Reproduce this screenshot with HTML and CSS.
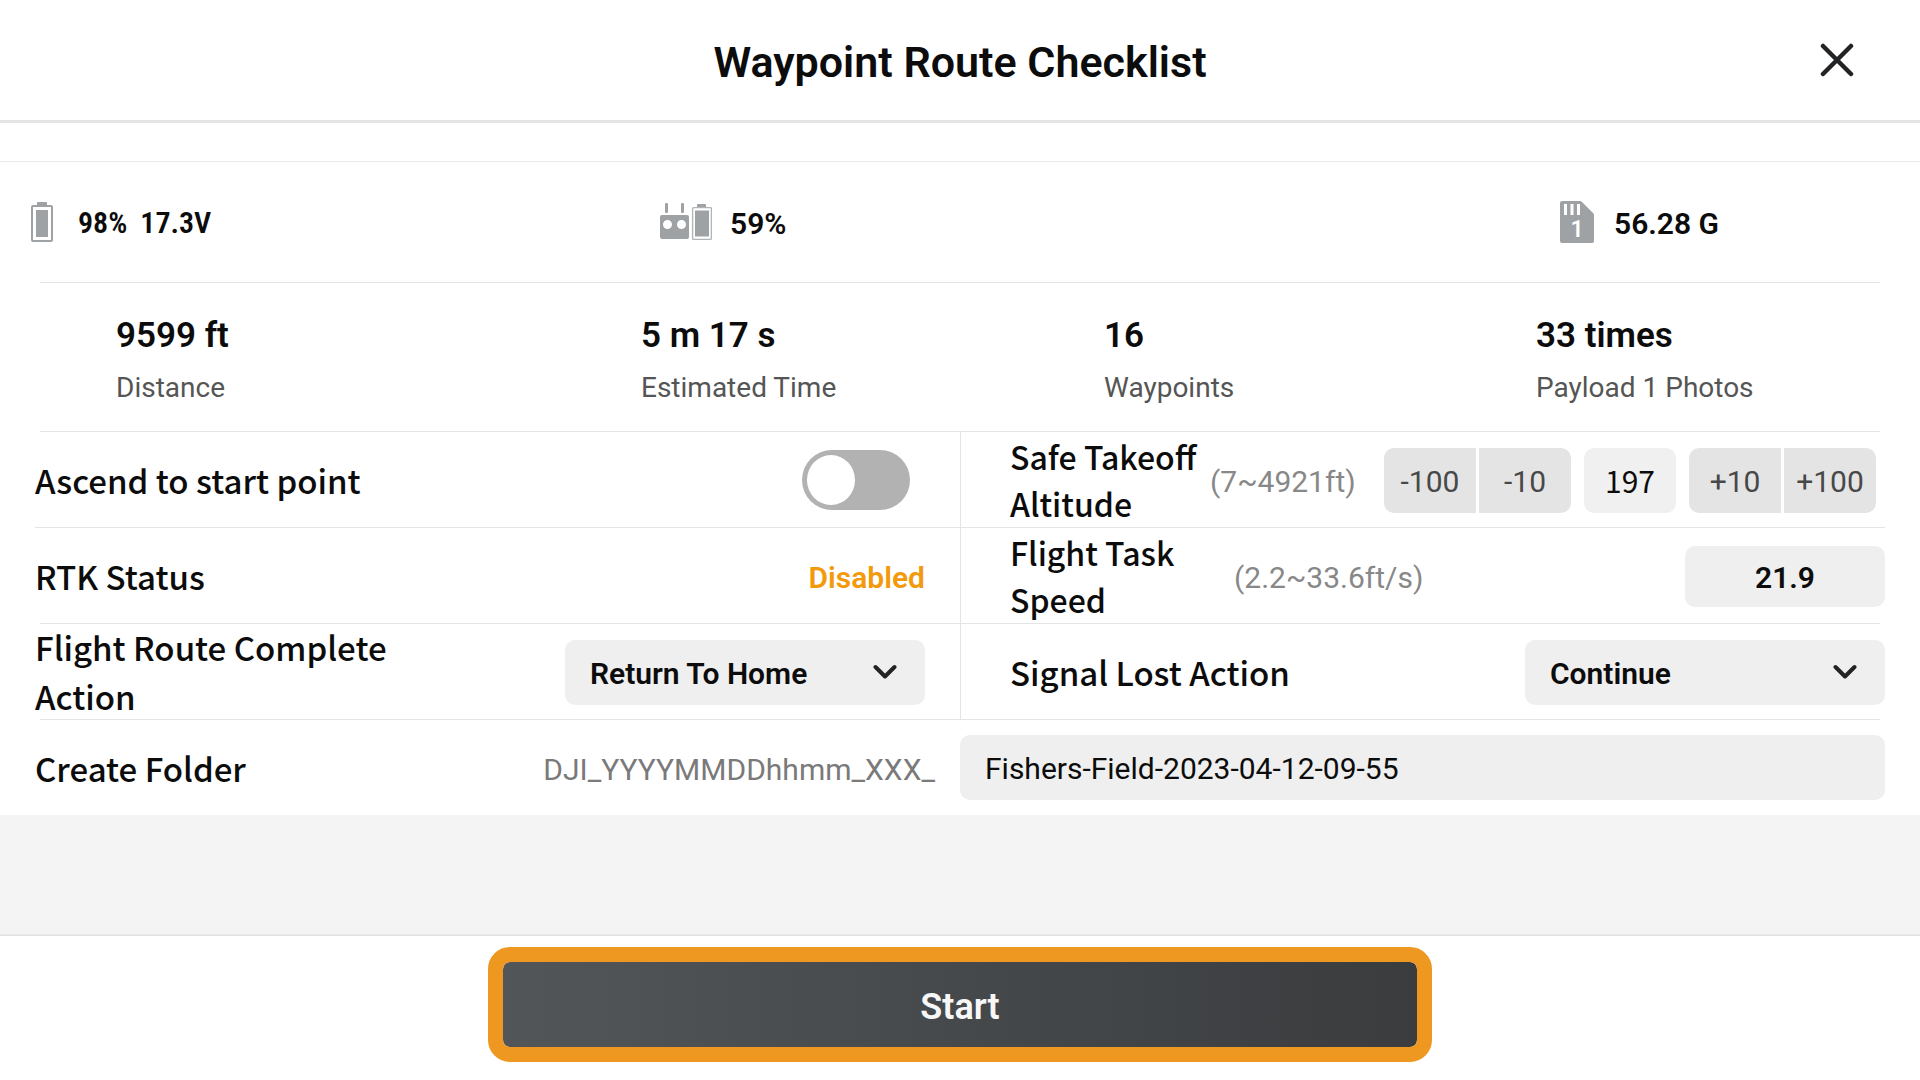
FILE: index.html
```html
<!DOCTYPE html>
<html lang="en">

<head>
    <meta charset="UTF-8">
    <meta name="viewport" content="width=device-width, initial-scale=1.0">
    <title>Waypoint Route Checklist</title>
    <link rel="stylesheet" href="styles.css">
</head>

<body>
    <header>
        <h1>Waypoint Route Checklist</h1>
        <button type="button" class="close" aria-label="Close">
            <svg width="34" height="34" viewBox="0 0 34 34">
                <path d="M3 3L31 31M31 3L3 31" fill="none" stroke="#212325" stroke-width="4.500" stroke-linecap="round"/>
            </svg>
        </button>
    </header>

    <main>
        <form id="checklist">
            <div class="status">
                <div class="state">
                    <svg class="icon-battery" width="22" height="40" viewBox="0 0 22 40">
                        <path d="M6 4V1a1 1 0 0 1 1-1h8a1 1 0 0 1 1 1v3z" fill="#9ea2a5"/>
                        <rect x="1" y="4" width="20" height="35" rx="1" fill="none" stroke="#9ea2a5" stroke-width="2"/>
                        <rect x="5" y="8" width="12" height="27" fill="#9ea2a5"/>
                    </svg>
                    <p class="narrow"><span>98%</span><span>17.3V</span></p>
                </div>
                <div class="state">
                    <svg class="icon-remote" width="52" height="38" viewBox="0 0 52 38">
                        <g fill="#9ea2a5">
                            <rect x="5" y="0" width="3" height="10" rx="1"/>
                            <rect x="21" y="0" width="3" height="10" rx="1"/>
                            <path fill-rule="evenodd" d="M2 12h25a2 2 0 0 1 2 2v20a2 2 0 0 1-2 2H2a2 2 0 0 1-2-2V14a2 2 0 0 1 2-2zM7.500 17a4.500 4.500 0 1 0 0 9a4.500 4.500 0 1 0 0-9zM21.500 17a4.500 4.500 0 1 0 0 9a4.500 4.500 0 1 0 0-9z"/>
                            <path d="M37 4V2a1 1 0 0 1 1-1h7a1 1 0 0 1 1 1v2z"/>
                            <rect x="35" y="7.500" width="14" height="26"/>
                        </g>
                        <rect x="32.600" y="4.600" width="18.800" height="31.800" rx="1" fill="none" stroke="#b2b5b7" stroke-width="1.400"/>
                    </svg>
                    <p>59%</p>
                </div>
                <div class="state">
                    <svg class="icon-card" width="34" height="42" viewBox="0 0 34 42">
                        <path d="M2 0H20Q21 0 22 1L33 12Q34 13 34 14V40a2 2 0 0 1-2 2H2a2 2 0 0 1-2-2V2a2 2 0 0 1 2-2z" fill="#9ea2a5"/>
                        <path d="M4 3h3v11h-3zM10.500 3h3v11h-3zM17 3h3v11h-3z" fill="#fff"/>
                        <text x="17" y="36" text-anchor="middle">1</text>
                    </svg>
                    <p>56.28 G</p>
                </div>
            </div>
            <hr>
            <dl class="stats">
                <div>
                    <dd>9599 ft</dd>
                    <dt>Distance</dt>
                </div>
                <div>
                    <dd>5 m 17 s</dd>
                    <dt>Estimated Time</dt>
                </div>
                <div>
                    <dd>16</dd>
                    <dt>Waypoints</dt>
                </div>
                <div>
                    <dd>33 times</dd>
                    <dt>Payload 1 Photos</dt>
                </div>
            </dl>
            <hr>

            <div class="row">
                <div class="cell">
                    <label class="label" for="ascend">Ascend to start point</label>
                    <input type="checkbox" class="toggle" id="ascend">
                </div>
                <div class="cell">
                    <label class="label takeoff" for="altitude">Safe Takeoff Altitude</label>
                    <span class="range">(7~4921ft)</span>
                    <div class="stepper">
                        <div class="pair">
                            <button type="button">-100</button>
                            <button type="button">-10</button>
                        </div>
                        <input type="text" class="altitude" id="altitude" value="197">
                        <div class="pair">
                            <button type="button">+10</button>
                            <button type="button">+100</button>
                        </div>
                    </div>
                </div>
            </div>
            <hr class="wide">
            <div class="row">
                <div class="cell">
                    <span class="label">RTK Status</span>
                    <strong class="disabled">Disabled</strong>
                </div>
                <div class="cell">
                    <label class="label speed" for="speed">Flight Task Speed</label>
                    <span class="range">(2.2~33.6ft/s)</span>
                    <input type="text" class="speed-box" id="speed" value="21.9">
                </div>
            </div>
            <hr>
            <div class="row">
                <div class="cell">
                    <label class="label complete" for="complete">Flight Route Complete Action</label>
                    <div class="select">
                        <select id="complete">
                            <option>Return To Home</option>
                        </select>
                        <svg width="24" height="16" viewBox="0 0 24 16">
                            <path d="M2.500 3L12 12.500L21.500 3" fill="none" stroke="#212325" stroke-width="4" stroke-linecap="round" stroke-linejoin="round"/>
                        </svg>
                    </div>
                </div>
                <div class="cell">
                    <label class="label" for="signal">Signal Lost Action</label>
                    <div class="select">
                        <select id="signal">
                            <option>Continue</option>
                        </select>
                        <svg width="24" height="16" viewBox="0 0 24 16">
                            <path d="M2.500 3L12 12.500L21.500 3" fill="none" stroke="#212325" stroke-width="4" stroke-linecap="round" stroke-linejoin="round"/>
                        </svg>
                    </div>
                </div>
            </div>
            <hr>
            <div class="row folder">
                <div class="cell">
                    <label class="label" for="folder">Create Folder</label>
                    <span class="prefix">DJI_YYYYMMDDhhmm_XXX_</span>
                </div>
                <input type="text" class="folder-name" id="folder" value="Fishers-Field-2023-04-12-09-55">
            </div>
        </form>
    </main>

    <footer>
        <button type="submit" form="checklist" class="start">Start</button>
    </footer>
</body>

</html>
```
FILE: styles.css
```css
* {
    margin: 0;
    padding: 0;
    box-sizing: border-box;
}

body {
    min-height: 100vh;
    display: flex;
    flex-direction: column;
    font-family: Roboto, sans-serif;
    font-size: 30px;
    color: #0c0c0c;
    background-color: #f4f4f4;
}

button,
input,
select {
    border: none;
    outline: none;
    font-family: inherit;
    font-size: 30px;
    color: #0c0c0c;
}

header {
    position: relative;
    height: 123px;
    padding-top: 3px;
    display: flex;
    align-items: center;
    justify-content: center;
    background-color: #fff;
    border-bottom: 3px solid #e4e4e4;
}

h1 {
    font-size: 43px;
    font-weight: 600;
}

.close {
    position: absolute;
    right: 66px;
    top: 43px;
    width: 34px;
    height: 34px;
    background: none;
}

main {
    flex: 1;
}

form {
    padding-top: 38px;
    background-color: #fff;
}

hr {
    height: 1px;
    margin: 0 40px;
    border: none;
    background-color: #e4e4e4;
}

.wide {
    margin: 0 35px;
}

svg {
    display: block;
}

/* aircraft, remote and storage */
.status {
    height: 121px;
    padding-left: 31px;
    display: grid;
    grid-template-columns: 629fr 900fr 360fr;
    border-top: 1px solid #ebebeb;
}

.state {
    display: flex;
    align-items: center;
    font-weight: 600;
}

.state p {
    line-height: 40px;
    padding-top: 3px;
}

.state .narrow {
    display: flex;
    gap: 13px;
    padding-top: 1px;
    font-family: "Roboto Condensed", Roboto, sans-serif;
}

.icon-battery {
    margin-right: 25px;
}

.icon-remote {
    margin-right: 18px;
}

.icon-card {
    margin-right: 20px;
}

.icon-card text {
    font-size: 23px;
    fill: #fff;
}

.stats {
    height: 148px;
    padding: 31px 0 0 116px;
    display: grid;
    grid-template-columns: 525fr 463fr 432fr 384fr;
}

.stats div {
    display: flex;
    flex-direction: column;
    gap: 10px;
}

.stats dd {
    font-size: 35px;
    line-height: 44px;
    font-weight: 600;
}

.stats dt {
    font-size: 28px;
    line-height: 40px;
    color: #555;
}

/* settings */
.row {
    padding-right: 35px;
    display: grid;
    grid-template-columns: 960fr 925fr;
    align-items: center;
}

.cell {
    height: 95px;
    padding: 1px 35px 0;
    display: flex;
    align-items: center;
    justify-content: space-between;
}

.cell + .cell {
    padding: 1px 0 0 49px;
    border-left: 1px solid #e4e4e4;
}

.label {
    font-family: "Noto Sans CJK SC", sans-serif;
    font-size: 33px;
    line-height: 47px;
    font-weight: 500;
}

.takeoff,
.speed {
    font-size: 32px;
}

.takeoff {
    width: 200px;
}

.speed {
    width: 224px;
}

.complete {
    width: 400px;
    line-height: 49px;
}

.range {
    padding-top: 2px;
    color: #888;
}

.toggle {
    appearance: none;
    width: 108px;
    height: 60px;
    margin-right: 15px;
    padding: 5px;
    border-radius: 30px;
    background-color: #b2b2b2;
}

.toggle::before {
    content: "";
    display: block;
    width: 48px;
    height: 50px;
    border-radius: 50%;
    background-color: #fff;
}

.toggle:checked::before {
    margin-left: auto;
}

.stepper {
    display: flex;
    gap: 13px;
    margin: 0 9px 0 auto;
}

.pair {
    display: flex;
    gap: 3px;
    border-radius: 10px;
    overflow: hidden;
}

.pair button {
    width: 92px;
    height: 65px;
    padding-top: 2px;
    color: #484848;
    background-color: #e4e4e4;
}

.altitude {
    width: 92px;
    border-radius: 10px;
    text-align: center;
    font-family: "Noto Sans CJK SC", sans-serif;
    background-color: #f0f0f0;
}

.disabled {
    padding-top: 2px;
    font-weight: 600;
    color: #f39a0c;
}

.speed-box {
    width: 200px;
    height: 61px;
    padding-top: 2px;
    margin-left: auto;
    border-radius: 10px;
    text-align: center;
    font-weight: 600;
    background-color: #efefef;
}

.select {
    position: relative;
    width: 360px;
}

.select select {
    appearance: none;
    display: block;
    width: 100%;
    height: 65px;
    padding: 2px 25px 0;
    border-radius: 10px;
    font-weight: 600;
    background-color: #efefef;
}

.select svg {
    position: absolute;
    right: 28px;
    top: 24px;
    pointer-events: none;
}

.folder .cell {
    padding-right: 25px;
}

.prefix {
    padding-top: 2px;
    color: #7a7a7a;
}

.folder-name {
    height: 65px;
    padding: 2px 25px 0;
    border-radius: 10px;
    background-color: #efefef;
}

footer {
    padding: 11px 0 18px;
    display: flex;
    justify-content: center;
    background-color: #fff;
    box-shadow: 0 -1px 2px #d8d8d8;
}

.start {
    width: 944px;
    max-width: 100%;
    height: 115px;
    padding-top: 4px;
    border: 15px solid #ee9822;
    border-radius: 22px;
    font-size: 36px;
    font-weight: 600;
    color: #f7f7f7;
    background: linear-gradient(to right, #525659, #3a3c3e) padding-box;
}
```
